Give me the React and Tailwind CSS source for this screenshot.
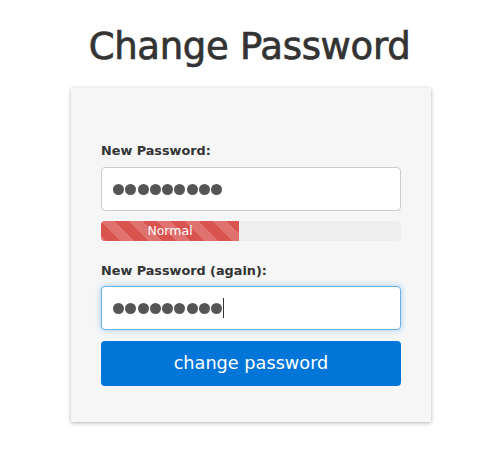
import { useState } from 'react'

const FONT = { fontFamily: '"DejaVu Sans", "Noto Sans", sans-serif' }

// masked password, drawn as dots
function Dots({ count }) {
    return (
        <div className="flex items-center gap-[1.3px]">
            {Array.from({ length: count }).map((_, i) => (
                <span key={i} className="block w-[11px] h-[11px] rounded-full bg-[#555555]" />
            ))}
        </div>
    )
}

function ChangePassword() {
    const [strength] = useState({ label: 'Normal', percent: 46 })

    return (
        <div className="w-[499px] h-[468px] bg-white text-[#333333]" style={FONT}>
            <h1 className="pt-[23px] text-center text-[37px] leading-[48px] font-normal tracking-[-0.3px] [-webkit-text-stroke:0.7px_#333333]">
                Change Password
            </h1>

            <div className="mt-[17px] ml-[71px] w-[360px] bg-[#f6f6f6] px-[30px] pt-[53px] pb-[36px] shadow-[0_1px_4px_rgba(0,0,0,0.3)]">
                <label className="block text-[12.8px] leading-[20px] font-bold">New Password:</label>
                <div className="mt-[6px] h-[44px] rounded-[4px] border border-[#cccccc] bg-white flex items-center px-[11px]">
                    <Dots count={9} />
                </div>

                <div className="mt-[10px] h-[20px] rounded-[4px] bg-[#eeeeee] overflow-hidden">
                    <div
                        className="h-full bg-[#d9534f] bg-[linear-gradient(45deg,rgba(255,255,255,0.18)_25%,transparent_25%,transparent_50%,rgba(255,255,255,0.18)_50%,rgba(255,255,255,0.18)_75%,transparent_75%,transparent)] bg-[length:28px_28px] flex items-center justify-center text-white text-[12.5px]"
                        style={{ width: `${strength.percent}%` }}
                    >
                        {strength.label}
                    </div>
                </div>

                <label className="mt-[20px] block text-[12.8px] leading-[20px] font-bold">New Password (again):</label>
                <div className="mt-[5px] h-[44px] rounded-[4px] border border-[#66afe9] bg-white flex items-center px-[11px] shadow-[0_0_6px_rgba(102,175,233,0.6)]">
                    <Dots count={9} />
                    <span className="ml-[1px] block w-[1px] h-[20px] bg-[#333333]" />
                </div>

                <button
                    type="button"
                    className="mt-[11px] w-full h-[45px] rounded-[4px] bg-[#0275d8] text-white text-[17.7px]"
                >
                    change password
                </button>
            </div>
        </div>
    )
}

export default function App() {
    return <ChangePassword />
}
